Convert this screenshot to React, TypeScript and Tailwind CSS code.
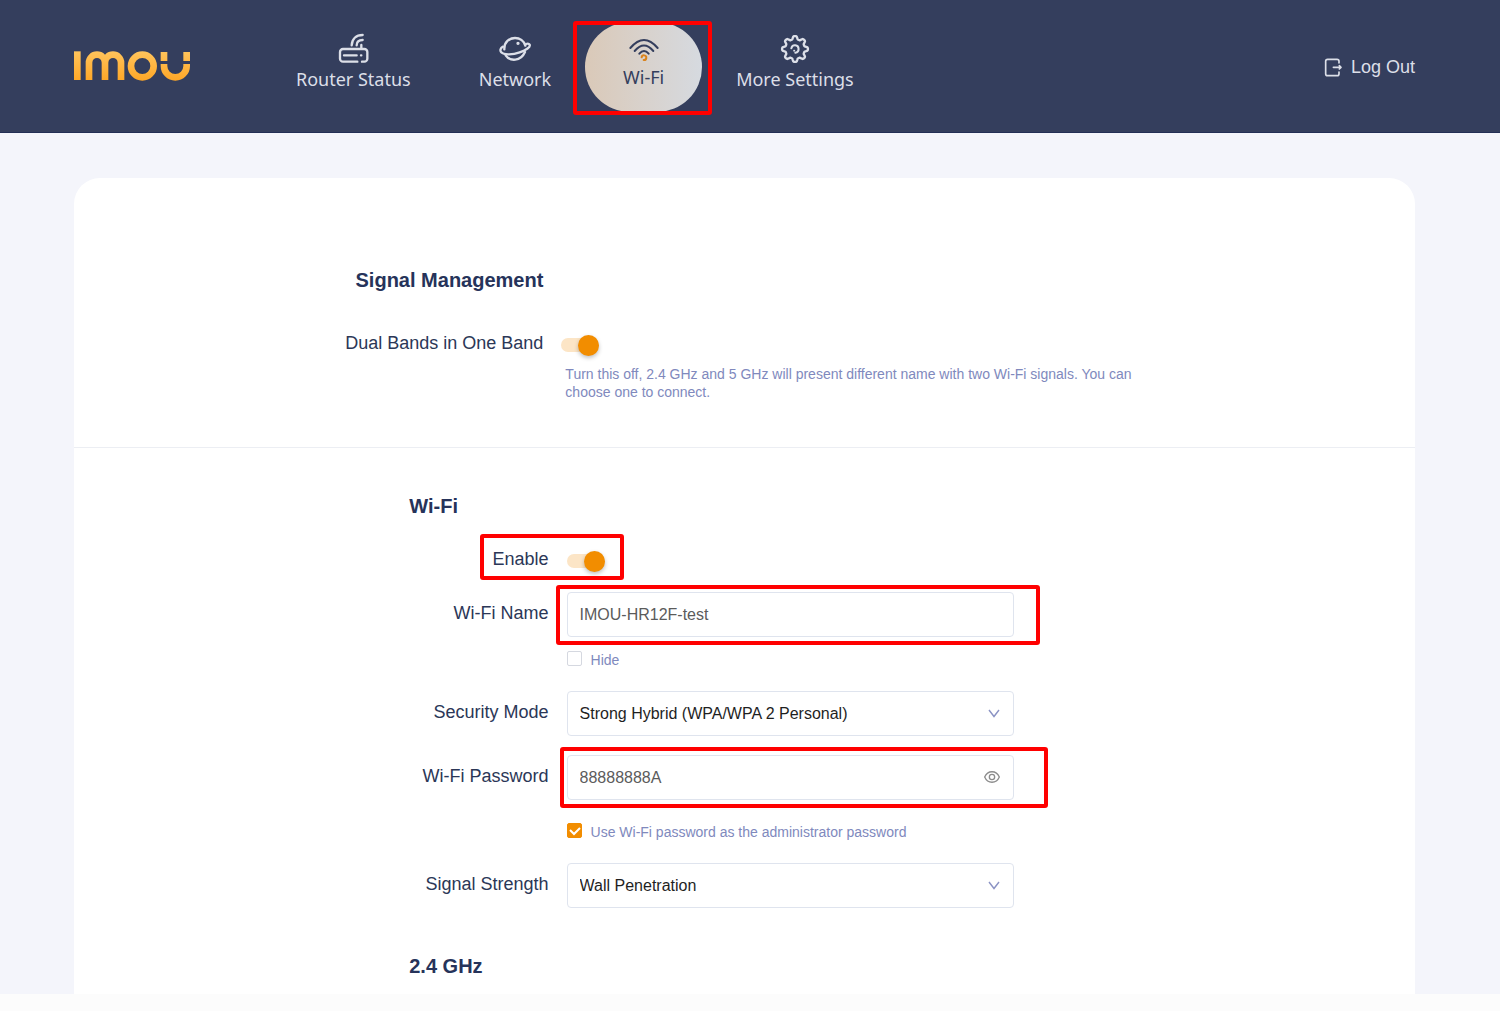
import { useState } from "react";
import type { ReactNode } from "react";
import clsx from "clsx";

function Logo() {
    return (
        <svg viewBox="0 0 354 90" className="h-[30px] w-[118px]" role="img" aria-label="Imou">
            <defs>
                <linearGradient id="logo" x1="0" y1="0" x2="0" y2="90" gradientUnits="userSpaceOnUse">
                    <stop offset="0" stopColor="#ffc45c" />
                    <stop offset="1" stopColor="#ffa726" />
                </linearGradient>
            </defs>
            <g fill="url(#logo)">
                <rect x="3" y="1" width="20" height="86" />
                <rect x="263" y="3" width="20" height="27" />
                <rect x="331" y="3" width="20" height="27" />
            </g>
            <g fill="none" stroke="url(#logo)" strokeWidth="20">
                <path d="M48 87V35a24 24 0 0 1 48 0V87M96 35a24 24 0 0 1 48 0V87" />
                <circle cx="208" cy="45" r="34" />
                <path d="M273 39V45a34 34 0 0 0 68 0V39" />
            </g>
        </svg>
    );
}

function RouterIcon() {
    return (
        <svg viewBox="0 0 93 93" className="size-[31px]" fill="none" stroke="currentColor" strokeWidth="7" strokeLinecap="round" aria-hidden="true">
            <path d="M58 86H15a9 9 0 0 1-9-9V57a9 9 0 0 1 9-9H79a9 9 0 0 1 9 9V77a9 9 0 0 1-9 9H72" />
            <path d="M18 67H56M69 67h1M70 46V36" />
            <path d="M41 37C42 18 54 6 74 6M56 37C56 27 62 21 74 21" />
        </svg>
    );
}

function PlanetIcon() {
    return (
        <svg viewBox="0 0 96 78" className="h-[26px] w-8" fill="none" stroke="currentColor" strokeWidth="7" strokeLinecap="round" aria-hidden="true">
            <path d="M16 40C15 18 31 6 48 6C62 6 75 14 79 29" />
            <path d="M12 32C4 36 2 44 7 49C15 58 42 56 62 49C82 42 95 33 92 26C90 23 86 22 81 24" />
            <path d="M20 58C33 77 65 77 78 48" />
            <circle cx="57" cy="22" r="3" fill="currentColor" strokeWidth="4" />
        </svg>
    );
}

function WifiIcon() {
    return (
        <svg viewBox="0 0 96 78" className="h-[26px] w-8" fill="none" stroke="currentColor" strokeWidth="6" strokeLinecap="round" aria-hidden="true">
            <path d="M7 33Q48 -15 89 33M20 42Q48 9 76 42M34 50Q48 34 62 50" />
            <path d="M41 61A7 7 0 1 1 47 69" stroke="#d9821c" />
        </svg>
    );
}

// Eight rounded teeth around the rim
const gearPath = Array.from({ length: 96 }, (_, i) => {
    const a = (i / 96) * Math.PI * 2;
    const r = 34 + 5 * Math.tanh(2 * Math.cos(a * 8));
    return `${i === 0 ? "M" : "L"}${(45 + r * Math.sin(a)).toFixed(1)} ${(45 - r * Math.cos(a)).toFixed(1)}`;
}).join("") + "Z";

function GearIcon() {
    return (
        <svg viewBox="0 0 90 90" className="size-[30px]" fill="none" stroke="currentColor" strokeWidth="7" strokeLinecap="round" strokeLinejoin="round" aria-hidden="true">
            <path d={gearPath} />
            <path d="M34 43A11 11 0 1 1 46 56" strokeWidth="6" />
            <path d="M42 50h1" strokeWidth="5" />
        </svg>
    );
}

function LogoutIcon() {
    return (
        <svg viewBox="0 0 57 57" className="size-[19px]" fill="none" stroke="currentColor" strokeWidth="5" strokeLinecap="round" strokeLinejoin="round" aria-hidden="true">
            <path d="M45 15V10a6 6 0 0 0-6-6H11a6 6 0 0 0-6 6V47a6 6 0 0 0 6 6H39a6 6 0 0 0 6-6V42" />
            <path d="M28 28H50M46 23l5 5-5 5" />
        </svg>
    );
}

function EyeIcon() {
    return (
        <svg viewBox="0 0 48 36" className="h-3 w-4" fill="none" stroke="currentColor" strokeWidth="4" aria-hidden="true">
            <path d="M2 18C11 -3 37 -3 46 18C37 39 11 39 2 18Z" />
            <circle cx="24" cy="18" r="8" />
        </svg>
    );
}

// Red frame laid over the part of the page to look at
function Marker({ className }: { className: string }) {
    return <span aria-hidden="true" className={clsx("pointer-events-none absolute rounded-[3px] border-4 border-[#ff0000]", className)} />;
}

function Switch({ id }: { id: string }) {
    const [on, setOn] = useState(true);
    return (
        <input
            id={id}
            type="checkbox"
            role="switch"
            checked={on}
            onChange={() => setOn(!on)}
            className="relative block h-[14px] w-[38px] appearance-none rounded-full bg-[#e5e7ee] before:absolute before:-top-[3px] before:left-0 before:size-[21px] before:rounded-full before:bg-white before:shadow-[0_2px_4px_rgba(0,0,0,0.25)] checked:bg-[#fce5c6] checked:before:left-[17px] checked:before:bg-[#f28d00]"
        />
    );
}

function CheckOption({ id, label, initial }: { id: string; label: string; initial: boolean }) {
    const [checked, setChecked] = useState(initial);
    return (
        <div className="flex items-start">
            <span className="relative flex">
                <input
                    id={id}
                    type="checkbox"
                    checked={checked}
                    onChange={() => setChecked(!checked)}
                    className="size-[15px] appearance-none rounded-[2px] border border-[#d5d8e0] bg-white checked:border-[#f28d00] checked:bg-[#f28d00]"
                />
                {checked && (
                    <svg viewBox="0 0 15 15" className="pointer-events-none absolute inset-0" fill="none" stroke="#fff" strokeWidth="2" aria-hidden="true">
                        <path d="M3 7l4 4 6-6" />
                    </svg>
                )}
            </span>
            <label htmlFor={id} className="pl-[9px] text-sm leading-[18px] text-[#8089bd]">{label}</label>
        </div>
    );
}

function Row({ id, label, children }: { id: string; label: string; children: ReactNode }) {
    return (
        <div className="flex gap-[18px]">
            <label htmlFor={id} className="w-[35%] text-right text-lg leading-[43px] text-[#2b3757]">{label}</label>
            <div className="relative w-[447px]">{children}</div>
        </div>
    );
}

const fieldClass = "block h-[45px] w-full appearance-none rounded border border-[#dfe4ee] bg-white px-3 text-base outline-none";

function SelectField({ id, options }: { id: string; options: string[] }) {
    return (
        <div className="relative">
            <select id={id} className={clsx(fieldClass, "text-[#1f1f1f]")}>
                {options.map((option) => (
                    <option key={option}>{option}</option>
                ))}
            </select>
            <svg viewBox="0 0 12 9" className="pointer-events-none absolute top-[18px] right-[14px] h-[9px] w-3" fill="none" stroke="#8b93c4" strokeWidth="1.4" aria-hidden="true">
                <path d="M1 1l5 6.5L11 1" />
            </svg>
        </div>
    );
}

export default function App() {
    const [name, setName] = useState("IMOU-HR12F-test");
    const [password, setPassword] = useState("88888888A");
    const [visible, setVisible] = useState(true);

    const navLink = "flex flex-col items-center px-[34px] pt-[33px]";

    return (
        <div className="bg-[#f4f5fb] font-['Liberation_Sans',Arial,sans-serif]">
            {/* Top bar */}
            <header className="flex h-[133px] items-start border-b border-[#232f55] bg-[#343e5d] pr-[85px] pl-[73px] text-[#dcdfe8]">
                <a href="#home" className="pt-[51px]"><Logo /></a>
                <nav className="ml-[71px] flex items-start font-['Noto_Sans','Open_Sans',sans-serif] text-lg leading-6">
                    <a href="#status" className={navLink}>
                        <RouterIcon />
                        <span className="pt-[3px]">Router Status</span>
                    </a>
                    <a href="#network" className={navLink}>
                        <span className="flex h-[31px] items-center"><PlanetIcon /></span>
                        <span className="pt-[3px]">Network</span>
                    </a>
                    <a href="#wifi" aria-current="page" className="relative mt-[22px] flex h-[90px] w-[117px] flex-col items-center rounded-[45px] bg-linear-to-r from-[#dac9b8] to-[#d6dae0] pt-[15px] text-[#343e5d]">
                        <WifiIcon />
                        <span className="pt-[2px]">Wi-Fi</span>
                        <Marker className="-top-px -right-[10px] -bottom-[3px] -left-3" />
                    </a>
                    <a href="#more" className={navLink}>
                        <span className="flex h-[31px] items-center"><GearIcon /></span>
                        <span className="pt-[3px]">More Settings</span>
                    </a>
                </nav>
                <button type="button" className="mt-[57px] ml-auto flex items-center gap-2 text-lg leading-5">
                    <LogoutIcon />
                    Log Out
                </button>
            </header>

            <main className="mt-[45px] mr-[85px] ml-[74px] rounded-t-[26px] bg-white">
                {/* Signal management */}
                <section className="border-b border-[#eceef3] pt-[88px] pb-[46px]">
                    <h2 className="w-[35%] text-right text-xl leading-7 font-bold text-[#26335a]">Signal Management</h2>
                    <div className="flex gap-[18px] pt-[38px]">
                        <label htmlFor="dual-bands" className="w-[35%] text-right text-lg leading-[22px] text-[#2b3757]">Dual Bands in One Band</label>
                        <div className="w-[44%] pt-[6px]">
                            <Switch id="dual-bands" />
                            <p className="pt-[13px] pl-1 text-sm leading-[18px] text-[#8089bd]">
                                Turn this off, 2.4 GHz and 5 GHz will present different name with two Wi-Fi signals. You can choose one to connect.
                            </p>
                        </div>
                    </div>
                </section>

                {/* Wi-Fi form */}
                <section className="pt-[44px] pb-[14px]">
                    <h2 className="ml-[25%] text-xl leading-7 font-bold text-[#26335a]">Wi-Fi</h2>
                    <form className="pt-[18px] pl-2" onSubmit={(event) => event.preventDefault()}>
                        <Row id="enable" label="Enable">
                            <div className="pt-4"><Switch id="enable" /></div>
                            <Marker className="-top-1 -left-[87px] h-[46px] w-36" />
                        </Row>
                        <div className="pt-[11px]">
                            <Row id="wifi-name" label="Wi-Fi Name">
                                <input id="wifi-name" value={name} onChange={(event) => setName(event.target.value)} className={clsx(fieldClass, "text-[#5b5b5b]")} />
                                <Marker className="-top-[7px] -right-[26px] -left-[11px] h-[60px]" />
                                <div className="pt-[14px] pb-[22px]">
                                    <CheckOption id="hide" label="Hide" initial={false} />
                                </div>
                            </Row>
                        </div>
                        <Row id="security" label="Security Mode">
                            <SelectField id="security" options={["Strong Hybrid (WPA/WPA 2 Personal)", "WPA 2 Personal", "None"]} />
                        </Row>
                        <div className="pt-[19px]">
                            <Row id="password" label="Wi-Fi Password">
                                <input
                                    id="password"
                                    type={visible ? "text" : "password"}
                                    value={password}
                                    onChange={(event) => setPassword(event.target.value)}
                                    className={clsx(fieldClass, "text-[#5b5b5b]")}
                                />
                                <button type="button" aria-label="Show password" onClick={() => setVisible(!visible)} className="absolute top-[16px] right-[14px] text-[#8c8c8c]">
                                    <EyeIcon />
                                </button>
                                <Marker className="-top-2 -right-[34px] -left-[7px] h-[61px]" />
                                <div className="pt-[23px] pb-[22px]">
                                    <CheckOption id="admin-password" label="Use Wi-Fi password as the administrator password" initial={true} />
                                </div>
                            </Row>
                        </div>
                        <Row id="strength" label="Signal Strength">
                            <SelectField id="strength" options={["Wall Penetration", "Standard", "Low"]} />
                        </Row>
                    </form>
                    <h2 className="ml-[25%] pt-[44px] text-xl leading-7 font-bold text-[#26335a]">2.4 GHz</h2>
                </section>
            </main>
            <footer className="h-[17px] bg-[#fcfcfc]" />
        </div>
    );
}
